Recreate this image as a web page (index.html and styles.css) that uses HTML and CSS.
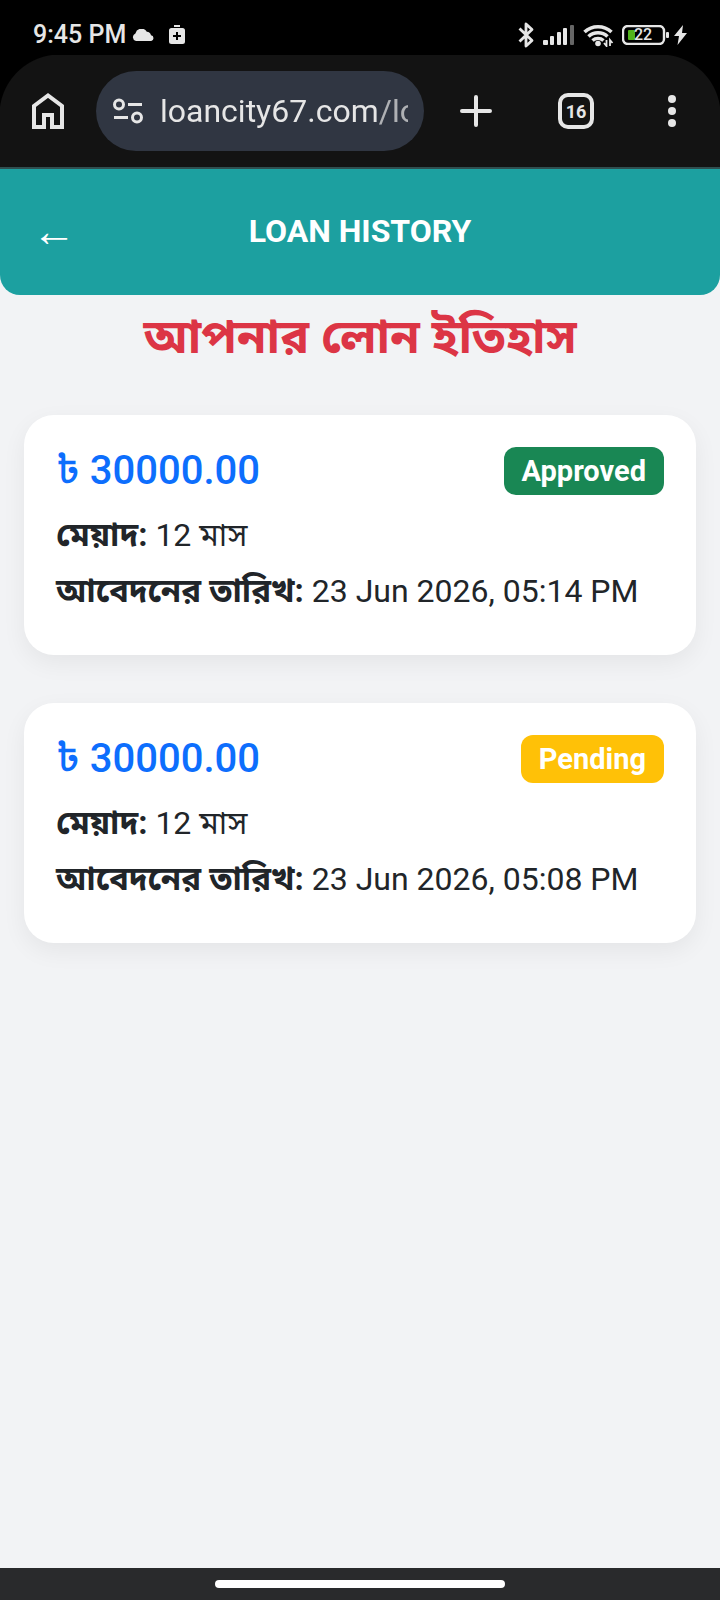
FILE: index.html
```
<!DOCTYPE html>
<html lang="bn">

	<head>
		<meta charset="UTF-8">
		<meta name="viewport" content="width=device-width, initial-scale=1.0">
		<title>Loan History</title>
		<link rel="stylesheet" href="styles.css">
	</head>

	<body>
		<!-- status bar -->
		<div class="status">
			<span class="time">9:45 PM</span>
			<svg class="cloud" width="22" height="12" viewBox="0 0 22 12"><path d="M4 12a4 4 0 0 1-.6-7.600A6.200 6.200 0 0 1 14.800 2.800 4.500 4.500 0 0 1 19 6.300 2.900 2.900 0 0 1 19.200 12z" fill="#e6e6e6"/></svg>
			<svg class="kit" width="16" height="20" viewBox="0 0 16 20"><path d="M5 0h6v2H5zM2.500 3h11A2.500 2.500 0 0 1 16 5.500v11a2.500 2.500 0 0 1-2.500 2.500h-11A2.500 2.500 0 0 1 0 16.500v-11A2.500 2.500 0 0 1 2.500 3z" fill="#e6e6e6"/><path d="M8 7v8M4 11h8" stroke="#000" stroke-width="2"/></svg>
			<div class="status-right">
				<svg width="17" height="26" viewBox="0 0 17 26"><path d="M1.500 6.500 14 18.500 8 24V2l6 5.500-12.500 12" fill="none" stroke="#e6e6e6" stroke-width="2.800" stroke-linejoin="round"/></svg>
				<svg class="signal" width="32" height="20" viewBox="0 0 32 20"><g fill="#e6e6e6"><rect y="15" width="5" height="5" rx="1"/><rect x="7" y="11" width="4" height="9" rx="1"/><rect x="14" y="7" width="4" height="13" rx="1"/><rect x="20" y="3" width="4" height="17" rx="1"/></g><rect x="27" width="4" height="20" rx="1" fill="#666"/></svg>
				<svg class="wifi" width="31" height="24" viewBox="0 0 31 24"><g fill="none" stroke="#e6e6e6" stroke-width="3.600"><path d="M1.500 9a20 20 0 0 1 27 0"/><path d="M5.500 13.500a14 14 0 0 1 19 0"/><path d="M9.500 17.500a8.500 8.500 0 0 1 11 0"/></g><circle cx="15" cy="20.500" r="2.800" fill="#e6e6e6"/><path d="M23.500 17v6l-2.500-3M27 23v-6l2.500 3" fill="none" stroke="#e6e6e6" stroke-width="1.800"/></svg>
				<svg class="battery" width="48" height="20" viewBox="0 0 48 20"><rect x="1" y="1" width="41" height="18" rx="5" fill="none" stroke="#e6e6e6" stroke-width="2.400"/><rect x="6" y="5" width="7" height="10" rx="1" fill="#52b41c"/><rect x="44" y="7" width="3" height="6" rx="1" fill="#e6e6e6"/><text x="21" y="15" text-anchor="middle" class="battery-text">22</text></svg>
				<svg class="bolt" width="13" height="20" viewBox="0 0 13 20"><path d="M9 0 0 11h5L3.500 20 13 8H8z" fill="#e6e6e6"/></svg>
			</div>
		</div>

		<!-- browser toolbar -->
		<div class="toolbar">
			<button type="button" class="tool" aria-label="Home">
				<svg width="32" height="36" viewBox="0 0 32 36"><path d="M2 34V13L16 2.500 30 13v21H20V22h-8v12z" fill="none" stroke="#e6e6e6" stroke-width="4"/></svg>
			</button>
			<div class="omnibox">
				<svg width="30" height="26" viewBox="0 0 30 26"><g fill="none" stroke="#e6e6e6" stroke-width="3"><circle cx="6" cy="6.500" r="4.500"/><circle cx="24" cy="19.500" r="4.500"/><path d="M15 6.500h14M1 19.500h14"/></g></svg>
				<input type="text" class="url" aria-label="Address" value="loancity67.com/loan">
			</div>
			<button type="button" class="tool new-tab" aria-label="New tab">
				<svg width="32" height="32" viewBox="0 0 32 32"><path d="M16 2v28M2 16h28" stroke="#e6e6e6" stroke-width="4" stroke-linecap="round"/></svg>
			</button>
			<button type="button" class="tool" aria-label="Tabs"><span class="tabs">16</span></button>
			<button type="button" class="tool" aria-label="Menu">
				<svg width="8" height="32" viewBox="0 0 8 32"><g fill="#e6e6e6"><circle cx="4" cy="4" r="4"/><circle cx="4" cy="16" r="4"/><circle cx="4" cy="28" r="4"/></g></svg>
			</button>
		</div>

		<!-- page -->
		<header class="header">
			<a href="#" class="back" aria-label="Back">←</a>
			<h1>LOAN HISTORY</h1>
		</header>

		<main class="content">
			<h2>আপনার লোন ইতিহাস</h2>

			<section class="card">
				<div class="card-top">
					<h3>৳ 30000.00</h3>
					<span class="badge approved">Approved</span>
				</div>
				<p><strong>মেয়াদ:</strong> 12 মাস</p>
				<p><strong>আবেদনের তারিখ:</strong> 23 Jun 2026, 05:14 PM</p>
			</section>

			<section class="card">
				<div class="card-top">
					<h3>৳ 30000.00</h3>
					<span class="badge pending">Pending</span>
				</div>
				<p><strong>মেয়াদ:</strong> 12 মাস</p>
				<p><strong>আবেদনের তারিখ:</strong> 23 Jun 2026, 05:08 PM</p>
			</section>
		</main>

		<!-- gesture bar -->
		<div class="navbar"><span></span></div>
	</body>

</html>
```
FILE: styles.css
```
* {
	box-sizing: border-box;
	margin: 0;
	padding: 0;
}

body {
	display: flex;
	flex-direction: column;
	min-height: 100vh;
	background: #f2f3f5;
	color: #212529;
	font-family: Roboto, "Noto Sans Bengali", "Noto Sans", sans-serif;
	font-size: 32px;
	line-height: 48px;
}

svg {
	flex: none;
	display: block;
}

/* status bar */
.status {
	display: flex;
	align-items: center;
	height: 55px;
	padding: 14px 33px 0;
	background: #000;
	color: #e6e6e6;
}

.time {
	font-size: 25px;
	font-weight: 500;
	line-height: 32px;
}

.cloud {
	margin-left: 6px;
}

.kit {
	margin-left: 15px;
}

.status-right {
	display: flex;
	align-items: center;
	margin-left: auto;
}

.signal,
.wifi,
.battery {
	margin-left: 8px;
}

.battery-text {
	fill: #e6e6e6;
	font-size: 16px;
	font-weight: 500;
}

.bolt {
	margin-left: 4px;
}

/* browser toolbar */
.toolbar {
	display: flex;
	align-items: center;
	height: 114px;
	border-bottom: 2px solid #2f4f50;
	background: radial-gradient(circle at 60px 60px, #131313 60px, #000 61px) 0 0 / 60px 60px no-repeat,
		radial-gradient(circle at 0 60px, #131313 60px, #000 61px) 100% 0 / 60px 60px no-repeat,
		#131313;
}

.tool {
	display: flex;
	align-items: center;
	justify-content: center;
	flex: none;
	width: 96px;
	height: 80px;
	border: 0;
	background: none;
	color: #e6e6e6;
	font-family: inherit;
}

.new-tab {
	margin: 0 4px;
}

.omnibox {
	display: flex;
	align-items: center;
	flex: 1;
	gap: 17px;
	min-width: 0;
	height: 80px;
	padding: 0 16px 0 17px;
	border-radius: 40px;
	background: #303642;
}

.url {
	flex: 1;
	min-width: 0;
	height: 48px;
	border: 0;
	outline: 0;
	background: none;
	color: #e6e6e6;
	font-family: inherit;
	font-size: 32px;
	-webkit-mask-image: linear-gradient(to right, #000 216px, rgba(0, 0, 0, .7) 217px);
	mask-image: linear-gradient(to right, #000 216px, rgba(0, 0, 0, .7) 217px);
}

.tabs {
	width: 36px;
	height: 36px;
	border: 4px solid #e6e6e6;
	border-radius: 10px;
	font-size: 18px;
	font-weight: 700;
	line-height: 29px;
}

/* header */
.header {
	display: grid;
	grid-template-columns: 1fr auto 1fr;
	align-items: center;
	height: 126px;
	padding: 0 32px 2px;
	border-radius: 0 0 20px 20px;
	background: #1ca0a0;
	color: #fff;
}

.header h1 {
	font-size: 32px;
	font-weight: 700;
}

.back {
	justify-self: start;
	color: #fff;
	font-size: 44px;
	line-height: 44px;
	text-decoration: none;
}

/* loan list */
.content {
	flex: 1;
	padding: 10px 24px 48px;
}

.content h2 {
	margin-bottom: 46px;
	color: #dc3545;
	font-size: 48px;
	font-weight: 700;
	line-height: 64px;
	text-align: center;
}

.card {
	margin-bottom: 48px;
	padding: 32px;
	border-radius: 30px;
	background: #fff;
	box-shadow: 0 8px 24px rgba(0, 0, 0, .06);
}

.card-top {
	display: flex;
	align-items: center;
	justify-content: space-between;
	margin-bottom: 16px;
}

.card h3 {
	color: #0d6efd;
	font-size: 40px;
	font-weight: 500;
}

.card p {
	margin-bottom: 8px;
}

.card strong {
	font-size: 33px;
	font-weight: 750;
	line-height: 40px;
}

.badge {
	padding: 0 18px;
	border-radius: 12px;
	color: #fff;
	font-size: 29px;
	font-weight: 700;
}

.approved {
	background: #198754;
}

.pending {
	background: #ffc107;
}

/* gesture bar */
.navbar {
	display: flex;
	justify-content: center;
	align-items: center;
	height: 32px;
	background: #292a2c;
}

.navbar span {
	width: 290px;
	height: 8px;
	border-radius: 4px;
	background: #fff;
}
```
